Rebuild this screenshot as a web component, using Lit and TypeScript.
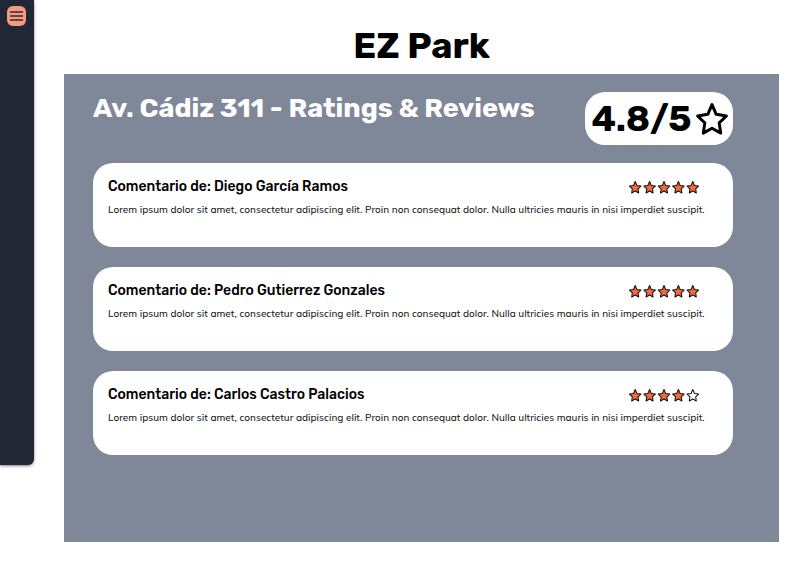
import { LitElement, html, css, svg } from "lit";
import { customElement, property } from "lit/decorators.js";

const STAR =
  "M12 2.4 14.8 8.9 21.6 10 16.8 14.6 17.8 21.4 12 18.2 6.2 21.4 7.2 14.6 2.4 10 9.2 8.9Z";

@customElement("star-rating")
class StarRating extends LitElement {
  @property({ type: Number }) value = 0;

  static styles = css`
    :host {
      display: block;
    }
    .stars {
      display: block;
      width: 72px;
      height: 14px;
    }
    .star {
      fill: #fff;
      stroke: #111;
      stroke-width: 1.7;
      stroke-linejoin: round;
    }
    .full {
      fill: #f0683c;
    }
  `;

  render() {
    return html`<svg class="stars" viewBox="0 0 120 23" role="img" aria-label="${this.value} de 5">
      ${[0, 1, 2, 3, 4].map(
        (i) => svg`<path class="star ${i < this.value ? "full" : ""}" transform="translate(${i * 24} 0)" d=${STAR} />`
      )}
    </svg>`;
  }
}

@customElement("review-card")
class ReviewCard extends LitElement {
  @property() author = "";
  @property() text = "";
  @property({ type: Number }) stars = 0;

  static styles = css`
    :host {
      display: block;
    }
    .card {
      box-sizing: border-box;
      min-height: 84px;
      padding: 14px 15px;
      border-radius: 20px;
      background: #fff;
      color: #000;
    }
    .head {
      display: flex;
      align-items: center;
      justify-content: space-between;
      padding-right: 18px;
    }
    .author {
      margin: 0;
      font: 500 14px/20px Rubik, Roboto, sans-serif;
    }
    .text {
      margin: 5px 0 0;
      color: #1a1a1a;
      font: 500 10px/16px Mulish, Lato, sans-serif;
    }
  `;

  render() {
    return html`<article class="card">
      <div class="head">
        <h3 class="author">Comentario de: ${this.author}</h3>
        <star-rating .value=${this.stars}></star-rating>
      </div>
      <p class="text">${this.text}</p>
    </article>`;
  }
}

const LOREM =
  "Lorem ipsum dolor sit amet, consectetur adipiscing elit. Proin non consequat dolor. Nulla ultricies mauris in nisi imperdiet suscipit.";

const REVIEWS = [
  { author: "Diego García Ramos", stars: 5 },
  { author: "Pedro Gutierrez Gonzales", stars: 5 },
  { author: "Carlos Castro Palacios", stars: 4 },
];

@customElement("app-root")
class AppRoot extends LitElement {
  static styles = css`
    :host {
      display: flex;
      align-items: flex-start;
      min-height: 100vh;
      background: #fff;
    }
    .side {
      box-sizing: border-box;
      flex: none;
      width: 34px;
      height: calc(100vh - 111px);
      padding: 6px 7px;
      border-radius: 0 0 6px 0;
      background: #212734;
      box-shadow: 0 1px 3px rgba(0, 0, 0, 0.5);
    }
    .menu {
      display: block;
      width: 19px;
      height: 20px;
      padding: 0;
      border: 0;
      border-radius: 6px;
      background: #f79b7e;
    }
    .bars {
      display: block;
      width: 19px;
      height: 20px;
    }
    .main {
      flex: 1;
      min-width: 0;
      padding: 24px 33px 34px 30px;
    }
    .brand {
      margin: 0 0 6px;
      text-align: center;
      color: #000;
      font: 700 36px/44px Rubik, Inter, sans-serif;
    }
    .panel {
      padding: 18px 46px 87px 29px;
      background: #7e8899;
    }
    .top {
      display: flex;
      align-items: flex-start;
      justify-content: space-between;
      margin-bottom: 18px;
    }
    .title {
      margin: 0;
      color: #fff;
      font: 700 27px/32px Rubik, Roboto, sans-serif;
    }
    .score {
      display: flex;
      align-items: center;
      justify-content: center;
      gap: 2px;
      box-sizing: border-box;
      flex: none;
      width: 148px;
      height: 53px;
      padding-left: 3px;
      border-radius: 20px;
      background: #fff;
      color: #000;
      font: 700 36px/53px Rubik, Inter, sans-serif;
    }
    .outline {
      flex: none;
      width: 36px;
      height: 36px;
      fill: none;
      stroke: #000;
      stroke-width: 2;
      stroke-linejoin: round;
    }
    .list {
      display: grid;
      gap: 20px;
    }
  `;

  render() {
    return html`
      <nav class="side">
        <button class="menu" aria-label="Menú">
          <svg class="bars" viewBox="0 0 19 20">
            <path d="M3 6h13M3 10h13M3 14h13" stroke="#2c2a34" stroke-width="1.6" />
          </svg>
        </button>
      </nav>
      <main class="main">
        <h1 class="brand">EZ Park</h1>
        <section class="panel">
          <div class="top">
            <h2 class="title">Av. Cádiz 311 - Ratings &amp; Reviews</h2>
            <div class="score">
              <span>4.8/5</span>
              <svg class="outline" viewBox="0 0 24 24"><path d=${STAR} /></svg>
            </div>
          </div>
          <div class="list">
            ${REVIEWS.map(
              (r) => html`<review-card .author=${r.author} .stars=${r.stars} .text=${LOREM}></review-card>`
            )}
          </div>
        </section>
      </main>
    `;
  }
}
